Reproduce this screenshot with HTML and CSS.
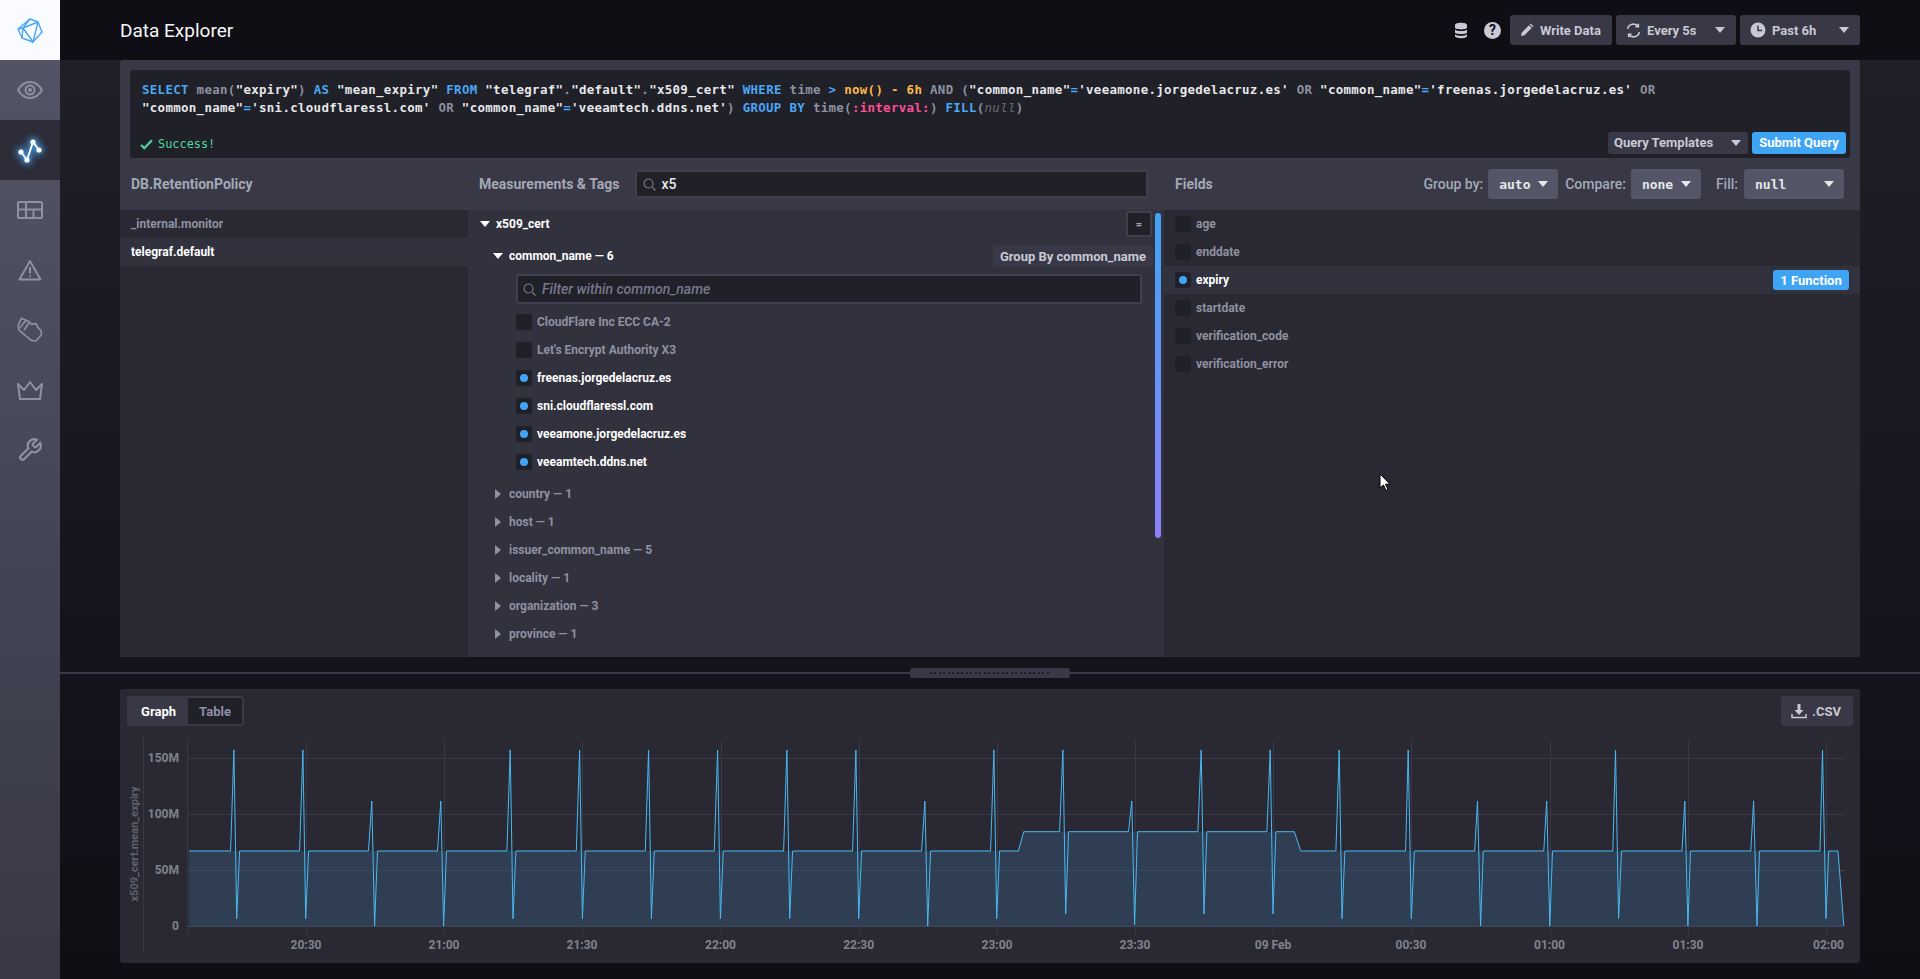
FILE: index.html
```html
<!DOCTYPE html>
<html lang="en">
<head>
<meta charset="utf-8">
<title>Data Explorer</title>
<link rel="stylesheet" href="styles.css">
</head>
<body>
<nav class="sidebar">
  <div class="nav-item logo">
    <svg width="28" height="28" viewBox="0 0 28 28" class="logo-svg"><path d="M14 3l8 3 4 10-9 10-11-4-4-9z"/><path d="M14 3l-7 9 15-6M7 12l10 14 5-20M7 12l-5 1M7 12l-1 10"/></svg>
  </div>
  <div class="nav-item">
    <svg width="28" height="20" viewBox="0 0 28 20" class="ico"><path d="M2 10c3-5 7-8 12-8s9 3 12 8c-3 5-7 8-12 8s-9-3-12-8z"/><circle cx="14" cy="10" r="4.500"/><circle cx="14" cy="10" r="1" class="solid"/></svg>
  </div>
  <div class="nav-item active">
    <svg width="32" height="32" viewBox="0 0 32 32" class="ico-active"><path d="M7 18l6 8 6-18 6 8"/><circle cx="7" cy="18" r="2.600"/><circle cx="13" cy="26" r="2.600"/><circle cx="19" cy="8" r="2.600"/><circle cx="25" cy="16" r="2.600"/></svg>
  </div>
  <div class="nav-item">
    <svg width="26" height="18" viewBox="0 0 26 18" class="ico"><rect x="1" y="1" width="24" height="16" rx="1"/><path d="M1 8.500h24M9 1v16M16.500 8.500v8.500"/></svg>
  </div>
  <div class="nav-item">
    <svg width="26" height="22" viewBox="0 0 26 22" class="ico"><path d="M13 2l10.500 18.500h-21z" stroke-linejoin="round"/><path d="M13 8v6.500M13 16.500v1.500"/></svg>
  </div>
  <div class="nav-item">
    <svg width="26" height="28" viewBox="0 0 26 28" class="ico hand"><path d="M4.300 2.300l8 3.400 2 2.600 4.700-.6 2 4 3.300 3.300v4l-5.300 6-4.700-.7L2.300 14.300 1 10z" stroke-linejoin="round"/><path d="M3 11.700L9 4.300M7 14.300l5.300-8"/></svg>
  </div>
  <div class="nav-item">
    <svg width="28" height="20" viewBox="0 0 28 20" class="ico"><path d="M2 4l6 6 6-8 6 8 6-6-2 15H4z" stroke-linejoin="round"/></svg>
  </div>
  <div class="nav-item">
    <svg width="26" height="26" viewBox="0 0 24 24" class="ico"><path d="M14.700 6.300a1 1 0 0 0 0 1.400l1.600 1.600a1 1 0 0 0 1.400 0l3.770-3.770a6 6 0 0 1-7.940 7.940l-6.910 6.910a2.120 2.120 0 0 1-3-3l6.910-6.910a6 6 0 0 1 7.940-7.940l-3.760 3.760z"/></svg>
  </div>
</nav>

<div class="main">
  <header class="topbar">
    <h1 class="title">Data Explorer</h1>
    <div class="top-actions">
      <svg width="14" height="17" viewBox="0 0 14 17" class="db-icon"><path d="M1 3c0-3 12-3 12 0v2.500c0 2.500-12 2.500-12 0zM1 7.500c2 2 10 2 12 0v3c0 2-12 2-12 0zM1 12.300c2 2 10 2 12 0v1.700c0 3-12 3-12 0z"/></svg>
      <span class="help">?</span>
      <button class="top-btn write">
        <svg width="14" height="14" viewBox="0 0 14 14" class="solid-ico"><path d="M1 13l.800-3.500 7.200-7.200 2.700 2.700-7.200 7.200zM9.700 1.600l1-1 2.700 2.700-1 1z"/></svg>
        Write Data
      </button>
      <button class="top-btn every">
        <svg width="15" height="15" viewBox="0 0 14 14" class="line-ico"><path d="M1.500 5.500a5.700 5.700 0 0 1 10-2.300M12.500 8.500a5.700 5.700 0 0 1-10 2.300M11.500 .8v2.700H8.800M2.500 13.200v-2.700h2.700"/></svg>
        <span class="grow">Every 5s</span>
        <span class="caret-down"></span>
      </button>
      <button class="top-btn past">
        <svg width="16" height="16" viewBox="0 0 16 16"><circle cx="8" cy="8" r="7.500" fill="#c8c9d4"/><path d="M8 3.500V8.500h4" fill="none" stroke="#383846" stroke-width="1.500"/></svg>
        <span class="grow">Past 6h</span>
        <span class="caret-down"></span>
      </button>
    </div>
  </header>

  <div class="content">
    <section class="builder">
      <div class="editor">
        <div class="query"><span class="k">SELECT</span> mean(<span class="s">"expiry"</span>) <span class="k">AS</span> <span class="s">"mean_expiry"</span> <span class="k">FROM</span> <span class="s">"telegraf"</span>.<span class="s">"default"</span>.<span class="s">"x509_cert"</span> <span class="k">WHERE</span> time <span class="k">&gt;</span> <span class="o">now() - 6h</span> AND (<span class="s">"common_name"</span><span class="k">=</span><span class="s">'veeamone.jorgedelacruz.es'</span> OR <span class="s">"common_name"</span><span class="k">=</span><span class="s">'freenas.jorgedelacruz.es'</span> OR<br><span class="s">"common_name"</span><span class="k">=</span><span class="s">'sni.cloudflaressl.com'</span> OR <span class="s">"common_name"</span><span class="k">=</span><span class="s">'veeamtech.ddns.net'</span>) <span class="k">GROUP BY</span> time(<span class="p">:interval:</span>) <span class="k">FILL</span>(<i class="n">null</i>)</div>
        <div class="editor-foot">
          <div class="status">
            <svg width="13" height="11" viewBox="0 0 12 10"><path d="M1 5.500l3 3 7-7.500" fill="none" stroke="#4ed8a0" stroke-width="2"/></svg>
            Success!
          </div>
          <div class="editor-btns">
            <button class="small-btn templates"><span class="grow">Query Templates</span><span class="caret-down"></span></button>
            <button class="small-btn submit">Submit Query</button>
          </div>
        </div>
      </div>

      <div class="columns">
        <div class="col col-db">
          <div class="col-head"><span class="col-title">DB.RetentionPolicy</span></div>
          <div class="col-body">
            <div class="row muted">_internal.monitor</div>
            <div class="row on">telegraf.default</div>
          </div>
        </div>

        <div class="col col-meas">
          <div class="col-head">
            <span class="col-title">Measurements &amp; Tags</span>
            <div class="search">
              <svg width="13" height="13" viewBox="0 0 13 13" class="search-ico"><circle cx="5.500" cy="5.500" r="4.500"/><path d="M9 9l3.500 3.500"/></svg>
              <span>x5</span>
            </div>
          </div>
          <div class="col-body tree">
            <div class="row on lvl1"><span class="caret-open"></span>x509_cert<span class="eq-btn">=</span></div>
            <div class="row on lvl2"><span class="caret-open"></span>common_name — 6<span class="group-btn">Group By common_name</span></div>
            <div class="filter">
              <svg width="13" height="13" viewBox="0 0 13 13" class="search-ico"><circle cx="5.500" cy="5.500" r="4.500"/><path d="M9 9l3.500 3.500"/></svg>
              <span>Filter within common_name</span>
            </div>
            <div class="tag-list">
              <div class="row muted tag"><span class="check"></span>CloudFlare Inc ECC CA-2</div>
              <div class="row muted tag"><span class="check"></span>Let's Encrypt Authority X3</div>
              <div class="row on tag"><span class="check checked"></span>freenas.jorgedelacruz.es</div>
              <div class="row on tag"><span class="check checked"></span>sni.cloudflaressl.com</div>
              <div class="row on tag"><span class="check checked"></span>veeamone.jorgedelacruz.es</div>
              <div class="row on tag"><span class="check checked"></span>veeamtech.ddns.net</div>
            </div>
            <div class="collapsed">
              <div class="row muted lvl2"><span class="caret-right"></span>country — 1</div>
              <div class="row muted lvl2"><span class="caret-right"></span>host — 1</div>
              <div class="row muted lvl2"><span class="caret-right"></span>issuer_common_name — 5</div>
              <div class="row muted lvl2"><span class="caret-right"></span>locality — 1</div>
              <div class="row muted lvl2"><span class="caret-right"></span>organization — 3</div>
              <div class="row muted lvl2"><span class="caret-right"></span>province — 1</div>
            </div>
            <div class="scrollbar"></div>
          </div>
        </div>

        <div class="col col-fields">
          <div class="col-head fields-head">
            <span class="col-title">Fields</span>
            <div class="group-controls">
              <span class="ctl-label">Group by:</span>
              <button class="ctl w70"><span class="grow">auto</span><span class="caret-down"></span></button>
              <span class="ctl-label">Compare:</span>
              <button class="ctl w70"><span class="grow">none</span><span class="caret-down"></span></button>
              <span class="ctl-label fill-label">Fill:</span>
              <button class="ctl w100"><span class="grow">null</span><span class="caret-down"></span></button>
            </div>
          </div>
          <div class="col-body">
            <div class="row muted field"><span class="check"></span>age</div>
            <div class="row muted field"><span class="check"></span>enddate</div>
            <div class="row on field selected"><span class="check checked"></span>expiry<span class="func">1 Function</span></div>
            <div class="row muted field"><span class="check"></span>startdate</div>
            <div class="row muted field"><span class="check"></span>verification_code</div>
            <div class="row muted field"><span class="check"></span>verification_error</div>
          </div>
        </div>
      </div>
    </section>

    <div class="divider">
      <div class="handle"><span class="dots"></span></div>
    </div>

    <section class="graph-panel">
      <div class="graph-bar">
        <div class="toggle"><span class="tog on-tog">Graph</span><span class="tog off-tog">Table</span></div>
        <button class="csv">
          <svg width="16" height="16" viewBox="0 0 16 16"><path d="M6.500 1h3v6h3L8 12 3.500 7h3z" fill="#c8c9d4"/><path d="M1 11v3.500h14V11" fill="none" stroke="#c8c9d4" stroke-width="1.500"/></svg>
          .CSV
        </button>
      </div>
      <svg class="chart" width="1740" height="233" viewBox="120 730 1740 233">
        <defs>
          <path id="series" d="M189 851L230.600 851 233.900 750 236.700 918.700 239.600 851 299.600 851 302.900 750 305.700 918.700 308.600 851 368.500 851 371.800 801 374.600 926 377.500 851 437.500 851 440.800 801 443.600 926 446.500 851 506.900 851 510.200 750 513 918.700 515.900 851 576.300 851 579.600 750 582.400 918.700 585.300 851 645.300 851 648.600 750 651.400 918.700 654.300 851 714.300 851 717.600 750 720.400 918.700 723.300 851 783.600 851 786.900 750 789.700 918.700 792.600 851 852.600 851 855.900 750 858.700 918.700 861.600 851 921.600 851 924.900 801 927.700 926 930.600 851 990.600 851 993.900 750 996.700 918.700 999.600 851 1018.400 851 1023.700 831.700 1059.600 831.700 1062.900 750 1065.700 914 1068.600 831.700 1128.500 831.700 1131.800 801 1134.600 925 1137.500 831.700 1197.900 831.700 1201.200 750 1204 914 1206.900 831.700 1266.900 831.700 1270.200 750 1273 914 1275.900 831.700 1294.300 831.700 1300.800 851 1335.900 851 1339.200 750 1342 918.700 1344.900 851 1405.600 851 1408.200 750 1411.300 918.700 1414.400 851 1474.700 851 1477.500 801 1480.600 926 1483.300 851 1543.800 851 1546.700 801 1549.800 926 1552.500 851 1612.800 851 1615.500 750 1618.600 918.700 1621.500 851 1682 851 1684.800 801 1687.900 926 1690.500 851 1750.800 851 1753.600 801 1757 926 1759.500 851 1820 851 1822.500 750 1826 918.700 1828.700 851 1838 851 1843.800 926"/>
        </defs>
        <g class="grid">
          <path d="M143.500 737V952M187.500 741V934"/>
          <path d="M187 758.500H1844M187 814.500H1844M187 870.500H1844"/>
          <path d="M306.500 741V934M444.500 741V934M582.500 741V934M721.500 741V934M859.500 741V934M997.500 741V934M1135.500 741V934M1273.500 741V934M1411.500 741V934M1550.500 741V934M1688.500 741V934M1826.500 741V934"/>
        </g>
        <path class="area" d="M189 926.500L189 851 1018.400 851 1023.700 831.700 1294.300 831.700 1300.800 851 1838 851 1843.800 926.500Z"/>
        <path class="grid-over" d="M187 870.500H1844M187 926.500H1844"/>
        <use href="#series" class="line"/>
        <text class="axis" x="179" y="762" text-anchor="end">150M</text>
        <text class="axis" x="179" y="818" text-anchor="end">100M</text>
        <text class="axis" x="179" y="874" text-anchor="end">50M</text>
        <text class="axis" x="179" y="930" text-anchor="end">0</text>
        <text class="axis" x="306" y="948.500" text-anchor="middle">20:30</text>
        <text class="axis" x="444" y="948.500" text-anchor="middle">21:00</text>
        <text class="axis" x="582" y="948.500" text-anchor="middle">21:30</text>
        <text class="axis" x="720.500" y="948.500" text-anchor="middle">22:00</text>
        <text class="axis" x="858.600" y="948.500" text-anchor="middle">22:30</text>
        <text class="axis" x="997" y="948.500" text-anchor="middle">23:00</text>
        <text class="axis" x="1135" y="948.500" text-anchor="middle">23:30</text>
        <text class="axis" x="1273" y="948.500" text-anchor="middle">09 Feb</text>
        <text class="axis" x="1411" y="948.500" text-anchor="middle">00:30</text>
        <text class="axis" x="1549.500" y="948.500" text-anchor="middle">01:00</text>
        <text class="axis" x="1688" y="948.500" text-anchor="middle">01:30</text>
        <text class="axis" x="1844" y="948.500" text-anchor="end">02:00</text>
        <text class="axis-title" transform="translate(137.500 844) rotate(-90)" text-anchor="middle">x509_cert.mean_expiry</text>
      </svg>
    </section>
  </div>
</div>

<svg class="cursor" width="12" height="19" viewBox="0 0 12 19"><path d="M1 1v14l3.500-3 2.500 5.500 2-1-2.500-5.300h4.500z" fill="#fff" stroke="#000" stroke-width="1"/></svg>
</body>
</html>
```

FILE: styles.css
```css
* { box-sizing: border-box; }
html, body { margin: 0; padding: 0; height: 979px; overflow: hidden; }
body {
  position: relative;
  display: flex;
  width: 1920px;
  background: #0f0e15;
  font-family: Roboto, "Liberation Sans", sans-serif;
  font-weight: 500;
  color: #c8c9d4;
}
button { font: inherit; border: 0; color: inherit; padding: 0; margin: 0; }

/* sidebar */
.sidebar {
  width: 60px;
  flex: none;
  height: 979px;
  display: flex;
  flex-direction: column;
  background: linear-gradient(to bottom, #545667 0%, #383846 100%);
}
.nav-item { height: 60px; display: flex; align-items: center; justify-content: center; }
.nav-item.logo { background: #fafbff; }
.nav-item.active { background: #2d2c38; }
.logo-svg path { fill: none; stroke: #4aa6f5; stroke-width: 1.4; stroke-linejoin: round; }
.ico { fill: none; stroke: #8e91a1; stroke-width: 2; }
.ico .solid { fill: #8e91a1; }
.ico.hand { stroke-width: 1.7; }
.ico-active { overflow: visible; filter: drop-shadow(0 0 4px #4aa6f5) drop-shadow(0 0 2px #4aa6f5); }
.ico-active path { fill: none; stroke: #fff; stroke-width: 1.8; }
.ico-active circle { fill: #fff; }

/* main */
.main { flex: 1; display: flex; flex-direction: column; min-width: 0; }
.topbar {
  height: 60px;
  flex: none;
  padding: 0 60px;
  display: flex;
  align-items: center;
  justify-content: space-between;
  background: #0f0e15;
}
.title { margin: 0; font-size: 19px; font-weight: 400; color: #f6f6f8; }
.top-actions { display: flex; align-items: center; gap: 4px; }
.db-icon { fill: #c8c9d4; margin-right: 11px; }
.help {
  width: 17px; height: 17px; border-radius: 50%;
  background: #c8c9d4; color: #0f0e15;
  font-size: 14px; font-weight: 700; line-height: 17px; text-align: center;
  margin-right: 5px;
  margin-left: 1px;
}
.top-btn {
  height: 30px;
  display: flex; align-items: center; gap: 6px;
  background: #383846; border-radius: 3px;
  font-size: 13px; font-weight: 700; color: #c8c9d4;
  padding: 0 10px;
}
.top-btn.write { width: 102px; }
.top-btn.every { width: 120px; padding-right: 11px; }
.top-btn.past { width: 120px; padding-right: 11px; }
.solid-ico { fill: #c8c9d4; }
.line-ico { fill: none; stroke: #c8c9d4; stroke-width: 1.5; }
.grow { flex: 1; text-align: left; }
.caret-down {
  width: 0; height: 0; flex: none;
  border-left: 5px solid transparent; border-right: 5px solid transparent;
  border-top: 6px solid currentColor;
}

/* content */
.content {
  flex: 1;
  padding: 0 60px;
  display: flex;
  flex-direction: column;
  background: linear-gradient(to bottom, #201f28 0%, #0f0e15 100%);
}
.builder {
  height: 597px;
  flex: none;
  background: #383846;
  border-radius: 3px 3px 0 0;
  display: flex;
  flex-direction: column;
  padding-top: 10px;
}
.editor {
  margin: 0 10px;
  height: 88px;
  flex: none;
  background: #202028;
  border-radius: 3px;
  padding: 11px 4px 4px 12px;
}
.query {
  height: 36px;
  font-family: "DejaVu Sans Mono", "Liberation Mono", monospace;
  font-size: 12.45px;
  font-weight: 700;
  letter-spacing: 0.312px;
  line-height: 18px;
  color: #8e91a1;
  white-space: nowrap;
}
.k { color: #4ba6f5; }
.s { color: #e7e8eb; }
.o { color: #ffb94a; }
.p { color: #ff4d96; }
.n { color: #676978; font-weight: 400; }
.editor-foot { margin-top: 15px; display: flex; justify-content: space-between; align-items: flex-end; }
.status {
  display: flex; align-items: center; gap: 5px;
  height: 22px;
  margin-left: -2px;
  padding-top: 2px;
  font-family: "DejaVu Sans Mono", "Liberation Mono", monospace;
  font-size: 11.9px;
  color: #4ed8a0;
}
.editor-btns { display: flex; gap: 4px; }
.small-btn {
  height: 22px; border-radius: 3px;
  display: flex; align-items: center; justify-content: center;
  font-size: 13px; font-weight: 700;
  padding-bottom: 1px;
}
.templates { width: 140px; background: #383846; color: #c8c9d4; padding: 0 7px 1px 6px; }
.submit { width: 94px; background: #40a4f5; color: #fff; }

.columns { flex: 1; display: grid; grid-template-columns: 348px 696px 696px; min-height: 0; }
.col { display: flex; flex-direction: column; min-height: 0; }
.col-head { height: 52px; flex: none; display: flex; align-items: center; padding-left: 11px; }
.col-title { font-size: 14px; font-weight: 700; color: #a4a8b6; white-space: nowrap; }
.col-body { flex: 1; background: #2a2933; min-height: 0; }
.tree { background: #32313e; position: relative; padding-top: 0; }
.search {
  margin-left: 15px;
  flex: none;
  width: 513px; height: 28px;
  background: #202028;
  border: 2px solid #403f4e;
  border-radius: 3px;
  display: flex; align-items: center; gap: 6px;
  padding-left: 6px;
  font-size: 14px; color: #e7e8eb;
}
.search-ico { fill: none; stroke: #757888; stroke-width: 1.2; flex: none; }

.row {
  height: 28px;
  display: flex; align-items: center;
  font-size: 12px; font-weight: 700;
  white-space: nowrap;
}
.muted { color: #8e91a1; }
.on { color: #fff; }
.col-db .row { padding-left: 11px; }
.col-db .row.on { background: #32313e; }
.lvl1 { padding: 0 12px; gap: 6px; }
.lvl2 { padding: 0 11px 0 25px; gap: 6px; }
.lvl2.on { margin-top: 4px; }
.caret-open {
  width: 0; height: 0; flex: none;
  border-left: 5px solid transparent; border-right: 5px solid transparent;
  border-top: 6px solid #fff;
}
.caret-right { width: 10px; height: 10px; flex: none; }
.caret-right::before {
  content: ""; display: block; width: 0; height: 0;
  margin-left: 2px;
  border-top: 5px solid transparent; border-bottom: 5px solid transparent;
  border-left: 6px solid #8e91a1;
}
.eq-btn {
  margin-left: auto;
  width: 26px; height: 26px;
  background: #202028; border: 2px solid #403f4e; border-radius: 2px;
  display: flex; align-items: center; justify-content: center;
  color: #a4a8b6; font-size: 11px;
}
.group-btn {
  margin-left: auto;
  height: 22px; width: 160px;
  background: #383846; border-radius: 3px;
  display: flex; align-items: center; justify-content: center;
  color: #c8c9d4; font-size: 13px;
}
.filter {
  margin: 4px 0 4px 48px;
  width: 626px; height: 30px;
  background: #202028;
  border: 2px solid #403f4e;
  border-radius: 3px;
  display: flex; align-items: center; gap: 6px;
  padding-left: 5px;
  font-size: 14px; font-style: italic; font-weight: 500; color: #757888;
}
.tag { padding-left: 48px; gap: 5px; }
.check { width: 16px; height: 16px; border-radius: 3px; background: #202028; flex: none; position: relative; }
.check.checked::after {
  content: ""; position: absolute; left: 4px; top: 4px;
  width: 8px; height: 8px; border-radius: 50%; background: #40a4f5;
}
.collapsed { margin-top: 4px; }
.scrollbar {
  position: absolute; right: 3px; top: 3px;
  width: 6px; height: 325px;
  border-radius: 3px;
  background: linear-gradient(to bottom, #40a4f5, #8f7ffb);
}
.fields-head { justify-content: space-between; padding-right: 16px; }
.group-controls { display: flex; align-items: center; font-size: 14px; }
.ctl-label { color: #a4a8b6; font-weight: 500; margin: 0 5px 0 0; }
.fill-label { margin: 0 6px 0 8px; }
.ctl {
  height: 30px;
  display: flex; align-items: center;
  background: #545667; border-radius: 3px;
  color: #e7e8eb;
  font-family: "DejaVu Sans Mono", "Liberation Mono", monospace;
  font-size: 13px; font-weight: 700;
  padding: 0 10px 0 11px;
  margin-right: 7px;
}
.ctl:last-child { margin-right: 0; }
.w70 { width: 70px; }
.w100 { width: 100px; }
.field { padding: 0 11px; gap: 5px; }
.field.selected { background: #32313e; }
.func {
  margin-left: auto;
  width: 76px; height: 20px;
  background: #40a4f5; border-radius: 3px; color: #fff;
  font-size: 13px;
  display: flex; align-items: center; justify-content: center;
}

/* divider */
.divider { height: 32px; flex: none; margin: 0 -60px; position: relative; }
.divider::before {
  content: ""; position: absolute; left: 0; right: 0; top: 15px; height: 2px;
  background: #383846;
}
.handle {
  position: absolute; left: 850px; top: 11px;
  width: 160px; height: 10px;
  background: #383846; border-radius: 3px;
  display: flex; align-items: center; justify-content: center;
}
.dots {
  width: 120px; height: 2px;
  background: repeating-linear-gradient(to right, #1f1e26 0, #1f1e26 2px, transparent 2px, transparent 4.500px);
}

/* graph */
.graph-panel {
  height: 274px; flex: none;
  background: #2a2933;
  border-radius: 3px;
  display: flex; flex-direction: column;
}
.graph-bar {
  height: 41px; flex: none;
  padding: 7px 7px 0 7px;
  display: flex; justify-content: space-between; align-items: flex-start;
}
.toggle {
  width: 117px; height: 30px;
  background: #383846; border-radius: 3px;
  padding: 2px;
  display: flex;
  font-size: 13px; font-weight: 700;
}
.tog { display: flex; align-items: center; justify-content: center; }
.on-tog { width: 59px; color: #fff; }
.off-tog { width: 54px; background: #202028; color: #8e91a1; border-radius: 0 2px 2px 0; }
.csv {
  width: 72px; height: 30px;
  background: #383846; border-radius: 3px;
  display: flex; align-items: center; justify-content: center; gap: 5px;
  font-size: 13px; font-weight: 700; color: #c8c9d4;
  padding-right: 2px;
}
.chart { display: block; }
.grid path { fill: none; stroke: #383846; stroke-width: 1; }
.area { fill: #2f3e52; stroke: none; }
.grid-over { fill: none; stroke: #3a4a5c; stroke-width: 1; }
.line { fill: none; stroke: #4ab8f0; stroke-width: 1; }
.axis { font-family: Roboto, "Liberation Sans", sans-serif; font-size: 12px; font-weight: 700; fill: #80828f; }
.axis-title { font-family: Roboto, "Liberation Sans", sans-serif; font-size: 11px; font-weight: 700; fill: #5f6070; }

.cursor { position: absolute; left: 1379px; top: 473px; }
```
